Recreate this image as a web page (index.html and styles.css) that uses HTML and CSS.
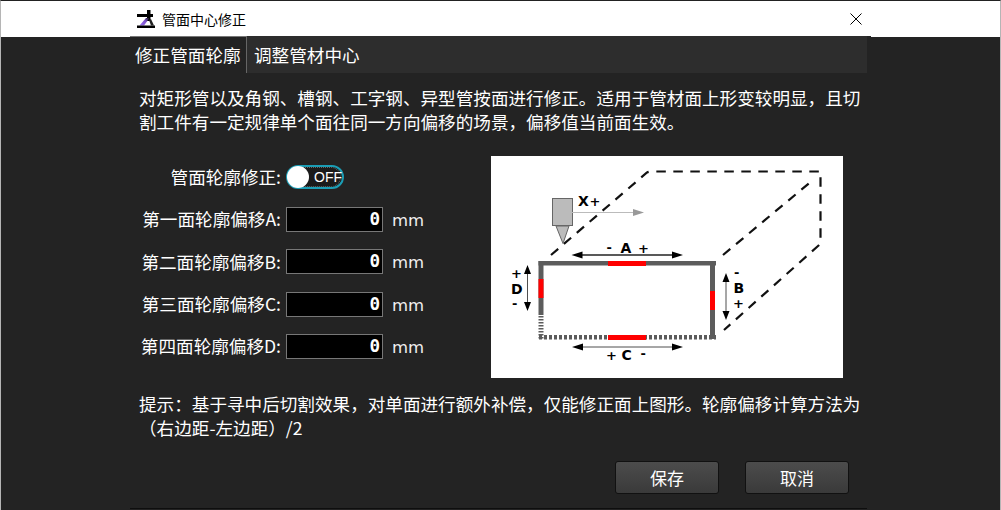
FILE: index.html
```html
<!DOCTYPE html>
<html lang="zh-CN">
<head>
<meta charset="utf-8">
<title>管面中心修正</title>
<link rel="stylesheet" href="styles.css">
</head>
<body>
<div class="window">
  <header class="titlebar">
    <svg class="app-icon" width="19" height="19" viewBox="0 0 19 19">
      <defs><linearGradient id="lg" x1="0" y1="1" x2="1" y2="0"><stop offset="0" stop-color="#9a6cf5"/><stop offset=".6" stop-color="#7a52c8"/><stop offset="1" stop-color="#111"/></linearGradient></defs>
      <path d="M0 4h16v3H0z" fill="#000"/>
      <path d="M10 0h3.500v11H10z" fill="#000"/>
      <path d="M9 8h3.500L7 15.500H2.500z" fill="url(#lg)"/>
      <path d="M12 10l2-1 3 6.500h-3z" fill="#222"/>
      <path d="M0 15.500h18V18H0z" fill="#000"/>
    </svg>
    <span class="title">管面中心修正</span>
    <svg class="close" width="12" height="12" viewBox="0 0 12 12"><path d="M.5.5l11 11M11.500.5l-11 11" stroke="#000" stroke-width="1" fill="none"/></svg>
  </header>
  <main class="panel">
    <nav class="tabs">
      <div class="tab tab-active">修正管面轮廓</div>
      <div class="tab">调整管材中心</div>
    </nav>
    <section class="content">
      <p class="text">对矩形管以及角钢、槽钢、工字钢、异型管按面进行修正。适用于管材面上形变较明显，且切割工件有一定规律单个面往同一方向偏移的场景，偏移值当前面生效。</p>
      <div class="middle">
        <div class="form">
          <div class="row row-toggle">
            <label class="label">管面轮廓修正:</label>
            <div class="toggle"><span class="knob"></span><span class="toggle-text">OFF</span></div>
          </div>
          <div class="row">
            <label class="label">第一面轮廓偏移A:</label>
            <div class="input">0</div><span class="unit">mm</span>
          </div>
          <div class="row">
            <label class="label">第二面轮廓偏移B:</label>
            <div class="input">0</div><span class="unit">mm</span>
          </div>
          <div class="row">
            <label class="label">第三面轮廓偏移C:</label>
            <div class="input">0</div><span class="unit">mm</span>
          </div>
          <div class="row">
            <label class="label">第四面轮廓偏移D:</label>
            <div class="input">0</div><span class="unit">mm</span>
          </div>
        </div>
        <svg class="diagram" width="352" height="222" viewBox="1 1 352 222">
          <rect x="1" y="1" width="352" height="222" fill="#fff"/>
          <g fill="none" stroke="#111" stroke-width="2.200" stroke-dasharray="9.500 7.500">
            <path d="M61 100L157 17.500Q159 16.500 162 16.500H330.500V86Q330.500 89 328 91L234 175"/>
            <path d="M233 100L323 25"/>
          </g>
          <rect x="62.500" y="43.500" width="20" height="27" fill="#bbb" stroke="#666" stroke-width="1"/>
          <path d="M66 71h13l-6 17.500z" fill="#bbb" stroke="#666" stroke-width="1"/>
          <path d="M82 57.500H144" stroke="#bbb" stroke-width="1"/>
          <path d="M143 54l11 3.500-11 3.500z" fill="#999"/>
          <g stroke="#5c5c5c" fill="none">
            <path d="M48.500 108.300H226" stroke-width="4.500"/>
            <path d="M222.500 106V184" stroke-width="5"/>
            <path d="M51 106V160" stroke-width="5"/>
            <path d="M51 161V184" stroke-width="5" stroke-dasharray="1.500 1.500"/>
            <path d="M49 182.300H226" stroke-width="4.500" stroke-dasharray="3 2"/>
          </g>
          <g fill="#f00">
            <rect x="118" y="106" width="38" height="5"/>
            <rect x="118" y="180" width="38" height="5"/>
            <rect x="48.500" y="124" width="5" height="19"/>
            <rect x="220" y="136" width="5" height="19"/>
          </g>
          <g stroke="#222" fill="none">
            <path d="M88 100H188" stroke-width="1.300"/>
            <path d="M88 192H188" stroke-width=".8"/>
            <path d="M37.500 115V152" stroke-width=".8"/>
            <path d="M236 124V160" stroke-width=".8"/>
          </g>
          <g fill="#000">
            <path d="M81.500 100l11-3.500v7zM193 100l-11-3.500v7z"/>
            <path d="M82 192l11-3.500v7zM193 192l-11-3.500v7z"/>
            <path d="M37.500 110l-3.500 9h7zM37.500 156l-3.500-9h7z"/>
            <path d="M236 118l-3.500 9h7zM236 165l-3.500-9h7z"/>
          </g>
          <g class="dia-text">
            <text x="88" y="50.500">X</text>
            <text x="130.500" y="97.500">A</text>
            <text x="21" y="139">D</text>
            <text x="243.500" y="138">B</text>
            <text x="131.500" y="205">C</text>
          </g>
          <g class="dia-sign">
            <text x="99.500" y="50.500">+</text><text x="148" y="97.500">+</text><text x="21" y="122.500">+</text><text x="243" y="152.500">+</text><text x="116" y="204.500">+</text>
            <text x="116.500" y="97">-</text><text x="22" y="153">-</text><text x="244" y="122">-</text><text x="150.500" y="203">-</text>
          </g>
        </svg>
      </div>
      <p class="text note">提示：基于寻中后切割效果，对单面进行额外补偿，仅能修正面上图形。轮廓偏移计算方法为（右边距-左边距）/2</p>
      <div class="actions">
        <button class="btn" type="button">保存</button>
        <button class="btn" type="button">取消</button>
      </div>
    </section>
  </main>
</div>
</body>
</html>
```
FILE: styles.css
```css
* { box-sizing: border-box; }
html, body { margin: 0; padding: 0; }
body {
  width: 1001px;
  height: 510px;
  overflow: hidden;
  font-family: "Noto Sans CJK SC", "Liberation Sans", sans-serif;
  background: #232323;
}
.window {
  width: 1001px;
  height: 510px;
  display: flex;
  flex-direction: column;
  background: #232323;
  border-top: 1px solid #222;
  border-left: 1px solid #b5b5b5;
  border-right: 1px solid #b5b5b5;
}
.titlebar {
  height: 36px;
  flex: none;
  background: #fff;
  display: flex;
  align-items: center;
  padding-left: 136px;
  padding-right: 138px;
  color: #000;
}
.app-icon { flex: none; }
.title { font-size: 14px; margin-left: 6px; line-height: 20px; }
.close { flex: none; margin-left: auto; }
.panel {
  flex: 1;
  margin-top: -1px;
  margin-left: 129px;
  width: 741px;
  background: #232323;
  display: flex;
  flex-direction: column;
}
.tabs {
  width: 737px;
  height: 37px;
  flex: none;
  background: #2d2d2d;
  display: flex;
}
.tab {
  color: #fff;
  font-size: 17.6px;
  line-height: 37px;
  padding: 0 7px;
  white-space: nowrap;
}
.tab-active {
  width: 117px;
  padding: 0 5px;
  background: #232323;
  border-top: 1px solid #777;
  border-right: 1px solid #666;
  line-height: 36px;
}
.content {
  width: 737px;
  flex: 1;
  padding: 13px 0 0 9px;
  border-bottom: 1px solid #0e0e0e;
  margin-bottom: 1px;
}
.text {
  margin: 0;
  width: 725px;
  color: #fff;
  font-size: 17.6px;
  line-height: 24px;
}
.middle {
  display: flex;
  margin-top: 22px;
  height: 222px;
}
.form {
  width: 352px;
  flex: none;
  padding-top: 9px;
  display: flex;
  flex-direction: column;
  gap: 17.3px;
}
.row {
  display: flex;
  align-items: center;
  height: 25px;
}
.row-toggle { height: 23px; margin-bottom: 1.700px; }
.label {
  width: 142px;
  text-align: right;
  color: #fff;
  font-size: 17.6px;
  line-height: 24px;
  white-space: nowrap;
  margin-right: 5px;
}
.toggle {
  width: 58px;
  height: 24px;
  border: 2px solid #1b9db5;
  border-radius: 12px;
  background: #1a1a1a;
  display: flex;
  align-items: center;
  position: relative;
}
.toggle::after {
  content: "";
  position: absolute;
  inset: 0 1px;
  border: 1px dotted #666;
  border-radius: 10px;
}
.knob {
  width: 22px;
  height: 22px;
  margin-left: -1px;
  border-radius: 50%;
  background: #fff;
  flex: none;
  position: relative;
  z-index: 1;
}
.toggle-text {
  font-family: "Liberation Sans", sans-serif;
  font-size: 14px;
  color: #fff;
  margin-left: 5px;
  position: relative;
  z-index: 1;
}
.input {
  width: 97px;
  height: 25px;
  background: #000;
  border: 1px solid #777;
  color: #fff;
  font-family: "DejaVu Sans Mono", monospace;
  font-weight: bold;
  font-size: 17.6px;
  line-height: 23px;
  text-align: right;
  padding-right: 2px;
}
.unit {
  font-family: "DejaVu Sans", sans-serif;
  font-size: 16.5px;
  line-height: 27px;
  padding-top: 2px;
  color: #f0f0f0;
  margin-left: 9px;
}
.diagram { display: block; flex: none; }
.dia-text {
  font-family: "DejaVu Sans", sans-serif;
  font-weight: bold;
  font-size: 14px;
  fill: #000;
}
.dia-sign {
  font-family: "DejaVu Sans", sans-serif;
  font-weight: bold;
  font-size: 13px;
  fill: #000;
}
.note { margin-top: 14px; }
.actions {
  display: flex;
  justify-content: flex-end;
  gap: 26px;
  margin-top: 21px;
  padding-right: 18px;
}
.btn {
  width: 104px;
  height: 33px;
  border: 1px solid #111;
  border-radius: 3px;
  background: linear-gradient(#4c4c4c, #3a3a3a);
  color: #fff;
  font-family: inherit;
  font-size: 17px;
  padding: 0;
}
```
